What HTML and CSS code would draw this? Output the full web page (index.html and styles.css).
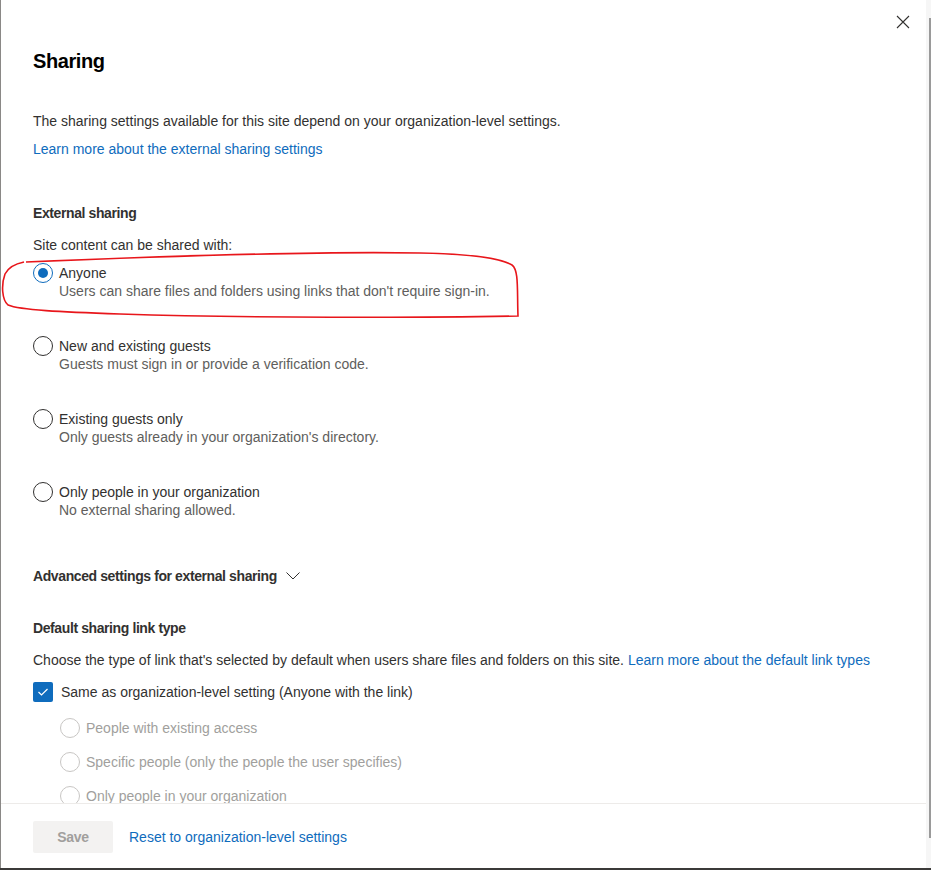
FILE: index.html
```html
<!DOCTYPE html>
<html lang="en">
<head>
    <meta charset="UTF-8">
    <title>Sharing</title>
    <link rel="stylesheet" href="styles.css">
</head>
<body>
    <div class="frame">
        <div class="panel">
            <button class="close-btn" aria-label="Close">
                <svg width="14" height="14" viewBox="0 0 14 14"><path d="M1 1 L13 13 M13 1 L1 13" stroke="#323130" stroke-width="1.1" fill="none"/></svg>
            </button>
            <div class="content">
                <h1>Sharing</h1>
                <p class="intro">The sharing settings available for this site depend on your organization-level settings.</p>
                <a class="link block-link" href="#">Learn more about the external sharing settings</a>

                <h2 class="section-title first">External sharing</h2>
                <div class="group-label">Site content can be shared with:</div>
                <div class="options">
                    <div class="option">
                        <span class="radio checked"></span>
                        <div class="option-text">
                            <div class="option-label">Anyone</div>
                            <div class="option-desc">Users can share files and folders using links that don't require sign-in.</div>
                        </div>
                    </div>
                    <div class="option">
                        <span class="radio"></span>
                        <div class="option-text">
                            <div class="option-label">New and existing guests</div>
                            <div class="option-desc">Guests must sign in or provide a verification code.</div>
                        </div>
                    </div>
                    <div class="option">
                        <span class="radio"></span>
                        <div class="option-text">
                            <div class="option-label">Existing guests only</div>
                            <div class="option-desc">Only guests already in your organization's directory.</div>
                        </div>
                    </div>
                    <div class="option">
                        <span class="radio"></span>
                        <div class="option-text">
                            <div class="option-label">Only people in your organization</div>
                            <div class="option-desc">No external sharing allowed.</div>
                        </div>
                    </div>
                </div>

                <div class="expander">
                    <span>Advanced settings for external sharing</span>
                    <svg width="14" height="8" viewBox="0 0 14 8"><path d="M0.5 0.5 L7 7 L13.5 0.5" stroke="#323130" stroke-width="1" fill="none"/></svg>
                </div>

                <h2 class="section-title">Default sharing link type</h2>
                <p class="choose">Choose the type of link that's selected by default when users share files and folders on this site. <a class="link" href="#">Learn more about the default link types</a></p>
                <div class="check-row">
                    <span class="checkbox">
                        <svg width="12" height="10" viewBox="0 0 12 10"><path d="M1.5 5 L4.5 8 L10.5 2" stroke="#fff" stroke-width="1.2" fill="none"/></svg>
                    </span>
                    <span>Same as organization-level setting (Anyone with the link)</span>
                </div>
                <div class="sub-options">
                    <div class="sub-option"><span class="radio disabled"></span><span>People with existing access</span></div>
                    <div class="sub-option"><span class="radio disabled"></span><span>Specific people (only the people the user specifies)</span></div>
                    <div class="sub-option"><span class="radio disabled"></span><span>Only people in your organization</span></div>
                </div>
            </div>
            <div class="footer">
                <button class="save-btn" disabled>Save</button>
                <a class="link" href="#">Reset to organization-level settings</a>
            </div>
            <svg class="annotation" width="931" height="870" viewBox="0 0 931 870">
                <path d="M26 262 C 120 258, 300 251, 420 253 C 470 254, 500 258, 512 265 C 519 270, 517 290, 518 316 C 420 318, 250 318, 120 314 C 60 312, 20 310, 8 305 C 2 300, 1 285, 5 274 C 8 268, 14 264, 24 262" stroke="#e8161b" stroke-width="1.6" fill="none"/>
            </svg>
        </div>
        <div class="scrollbar"><div class="thumb"></div></div>
    </div>
</body>
</html>
```

FILE: styles.css
```css
body { margin: 0; font-family: "Liberation Sans", Arial, sans-serif; font-size: 14px; color: #323130; background-color: #ffffff; }
.frame { display: flex; height: 868px; border-bottom: 2px solid #3b3a39; }
.panel { position: relative; flex: 1; display: flex; flex-direction: column; border-left: 1px solid #8a8886; }
.scrollbar { width: 5px; background-color: #f6f6f6; display: flex; justify-content: flex-end; padding-top: 18px; padding-bottom: 30px; }
.thumb { width: 2px; background-color: #9a9a9a; }
.close-btn { position: absolute; top: 15px; right: 16px; background: none; border: none; padding: 0; width: 14px; height: 14px; cursor: pointer; }
.close-btn svg { display: block; }
.content { height: 756px; overflow: hidden; padding: 47px 0 0 32px; }
h1 { margin: 0; font-size: 20px; line-height: 28px; font-weight: bold; color: #000000; letter-spacing: -0.4px; }
.intro { margin: 36px 0 0; line-height: 20px; }
.link { color: #0f6cbd; text-decoration: none; }
.block-link { display: block; margin-top: 8px; line-height: 20px; }
.section-title { margin: 44px 0 0; font-size: 14px; line-height: 20px; font-weight: bold; color: #323130; letter-spacing: -0.4px; }
.group-label { margin-top: 12px; line-height: 20px; }
.options { margin-top: 9px; display: flex; flex-direction: column; gap: 37px; }
.option { display: flex; gap: 6px; align-items: flex-start; }
.option .radio { margin-top: -1px; }
.option-text { line-height: 18px; }
.option-desc { color: #605e5c; }
.radio { box-sizing: border-box; width: 20px; height: 20px; border-radius: 50%; border: 1px solid #323130; flex-shrink: 0; display: flex; align-items: center; justify-content: center; background-color: #fff; }
.radio.checked { border-color: #0f6cbd; }
.radio.checked::after { content: ""; width: 10px; height: 10px; border-radius: 50%; background-color: #0f6cbd; }
.radio.disabled { border-color: #c8c6c4; }
.expander { margin-top: 47px; line-height: 20px; font-weight: bold; color: #323130; letter-spacing: -0.4px; display: flex; align-items: center; gap: 9px; }
.expander + .section-title { margin-top: 32px; }
.choose { margin: 12px 0 0; line-height: 20px; }
.check-row { margin-top: 12px; display: flex; align-items: center; gap: 8px; line-height: 20px; }
.checkbox { box-sizing: border-box; width: 20px; height: 20px; border-radius: 2px; background-color: #0f6cbd; display: flex; align-items: center; justify-content: center; flex-shrink: 0; }
.sub-options { margin-top: 16px; padding-left: 27px; display: flex; flex-direction: column; gap: 14px; color: #a19f9d; }
.sub-option { display: flex; align-items: center; gap: 6px; line-height: 20px; }
.footer { border-top: 1px solid #edebe9; padding: 17px 0 0 32px; display: flex; gap: 16px; flex: 1; align-items: flex-start; }
.footer .link { line-height: 33px; }
.save-btn { width: 80px; height: 32px; border: none; border-radius: 2px; background-color: #f3f2f1; color: #a19f9d; font-family: inherit; font-size: 14px; font-weight: bold; letter-spacing: -0.3px; }
.annotation { position: absolute; top: 0; left: -1px; pointer-events: none; }
```
